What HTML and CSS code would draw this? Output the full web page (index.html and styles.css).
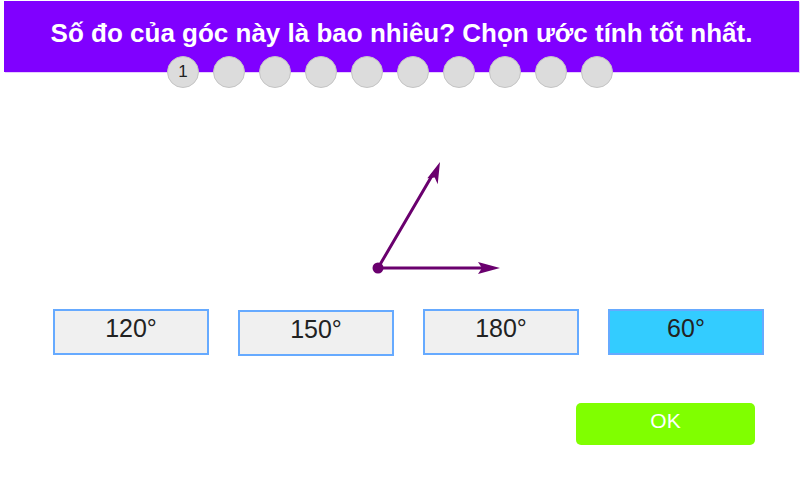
FILE: index.html
```html
<!DOCTYPE html>
<html>
<head>
<meta charset="utf-8">
<link rel="stylesheet" href="styles.css">
</head>
<body>
<div class="page">
  <header class="header">
    <h1 class="title">Số đo của góc này là bao nhiêu? Chọn ước tính tốt nhất.</h1>
  </header>
  <div class="dots">
    <span class="dot">1</span>
    <span class="dot"></span>
    <span class="dot"></span>
    <span class="dot"></span>
    <span class="dot"></span>
    <span class="dot"></span>
    <span class="dot"></span>
    <span class="dot"></span>
    <span class="dot"></span>
    <span class="dot"></span>
  </div>
  <div class="figure">
    <svg class="angle" width="160" height="140" viewBox="360 150 160 140">
      <g stroke="#6a006e" stroke-width="3" fill="none" stroke-linecap="round">
        <line x1="378" y1="268" x2="488" y2="268"/>
        <line x1="378" y1="268" x2="433" y2="174"/>
      </g>
      <g fill="#6a006e">
        <polygon points="500,268 478,262 482,268 478,274"/>
        <polygon points="440,162 437.7,184.3 434.7,177.5 427.3,178.2"/>
        <circle cx="378" cy="268" r="5.5"/>
      </g>
    </svg>
  </div>
  <div class="choices">
    <button class="choice">120°</button>
    <button class="choice choice-low">150°</button>
    <button class="choice">180°</button>
    <button class="choice choice-selected">60°</button>
  </div>
  <div class="actions">
    <button class="ok">OK</button>
  </div>
</div>
</body>
</html>
```
FILE: styles.css
```css
html, body {
  margin: 0;
  padding: 0;
  background: #ffffff;
}
.page {
  width: 803px;
  height: 495px;
  font-family: "Liberation Sans", Arial, sans-serif;
}
.header {
  margin: 1px 0 0 4px;
  width: 795px;
  height: 71px;
  background: #8000ff;
  box-shadow: 1px 1px 0 #e6ccff;
  display: flex;
  justify-content: center;
}
.title {
  margin: 0;
  padding-top: 17px;
  color: #ffffff;
  font-size: 26px;
  font-weight: bold;
  line-height: 30px;
  white-space: nowrap;
}
.dots {
  display: flex;
  gap: 14px;
  margin-top: -16px;
  padding-left: 167px;
  position: relative;
}
.dot {
  box-sizing: border-box;
  width: 32px;
  height: 32px;
  border-radius: 50%;
  background: #dcdcdc;
  border: 1px solid #c4c4c4;
  display: flex;
  align-items: center;
  justify-content: center;
  font-size: 17px;
  color: #222;
}
.figure {
  height: 221px;
  position: relative;
}
.angle {
  display: block;
  margin-left: 360px;
  padding-top: 62px;
}
.choices {
  display: flex;
  gap: 29px;
  padding-left: 53px;
  height: 94px;
}
.choice {
  box-sizing: border-box;
  width: 156px;
  height: 46px;
  margin: 0;
  background: #f0f0f0;
  border: 2px solid #66aaff;
  font-family: "Liberation Sans", Arial, sans-serif;
  font-size: 25px;
  color: #222222;
  padding: 0 0 8px;
}
.choice-low {
  margin-top: 1px;
}
.choice-selected {
  background: #33ccff;
}
.actions {
  display: flex;
  padding-left: 576px;
}
.ok {
  width: 179px;
  height: 42px;
  margin: 0;
  border: none;
  border-radius: 5px;
  background: #80ff00;
  color: #ffffff;
  font-family: "Liberation Sans", Arial, sans-serif;
  font-size: 21px;
  padding: 0 0 6px;
}
```
